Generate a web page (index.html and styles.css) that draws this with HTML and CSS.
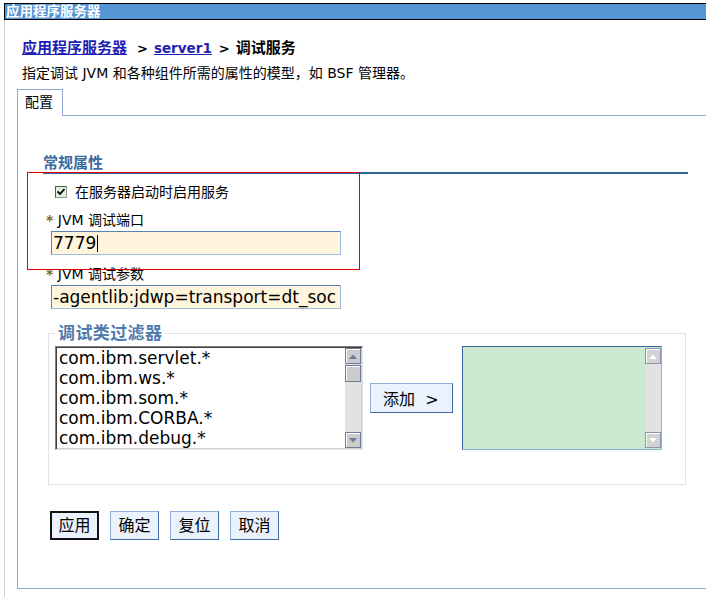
FILE: index.html
```html
<!DOCTYPE html>
<html lang="zh">
<head>
<meta charset="utf-8">
<title>调试服务</title>
<link rel="stylesheet" href="styles.css">
</head>
<body>
<div class="titlebar">应用程序服务器</div>
<div class="page">
  <div class="crumb"><a href="#">应用程序服务器</a><span class="sep sep1">&gt;</span><a href="#" class="latin">server1</a><span class="sep sep2">&gt;</span>调试服务</div>
  <div class="desc">指定调试 JVM 和各种组件所需的属性的模型，如 BSF 管理器。</div>
  <div class="tabs"><div class="tab">配置</div></div>
  <div class="panel">
    <h2 class="section">常规属性</h2>
    <div class="check-row">
      <span class="cb"><svg width="8" height="8" viewBox="0 0 8 8"><path d="M0.5 3.5 L3 6 L7.5 1" fill="none" stroke="#000" stroke-width="1.8"/></svg></span>
      <span>在服务器启动时启用服务</span>
    </div>
    <div class="label"><span class="req">*</span> JVM 调试端口</div>
    <div class="field">7779<span class="caret"></span></div>
    <div class="label label2"><span class="req">*</span> JVM 调试参数</div>
    <div class="field">-agentlib:jdwp=transport=dt_soc</div>
    <fieldset class="filters">
      <legend>调试类过滤器</legend>
      <div class="lists">
        <div class="listbox">
          <div class="items">
            <div class="item">com.ibm.servlet.*</div>
            <div class="item">com.ibm.ws.*</div>
            <div class="item">com.ibm.som.*</div>
            <div class="item">com.ibm.CORBA.*</div>
            <div class="item">com.ibm.debug.*</div>
          </div>
          <div class="sbar">
            <div class="sbtn"><svg width="8" height="5" viewBox="0 0 8 5"><path d="M0 5 L4 0.5 L8 5 Z" fill="#6d7b98"/></svg></div>
            <div class="thumb"></div>
            <div class="track"></div>
            <div class="sbtn"><svg width="8" height="5" viewBox="0 0 8 5"><path d="M0 0 L4 4.5 L8 0 Z" fill="#6d7b98"/></svg></div>
          </div>
        </div>
        <button class="btn add" type="button">添加&nbsp; &gt;</button>
        <div class="listbox green">
          <div class="items"></div>
          <div class="sbar">
            <div class="sbtn off"><svg width="8" height="5" viewBox="0 0 8 5"><path d="M0 5 L4 0.5 L8 5 Z" fill="#ffffff"/></svg></div>
            <div class="track"></div>
            <div class="sbtn off"><svg width="8" height="5" viewBox="0 0 8 5"><path d="M0 0 L4 4.5 L8 0 Z" fill="#ffffff"/></svg></div>
          </div>
        </div>
      </div>
    </fieldset>
    <div class="actions">
      <button class="btn act default" type="button">应用</button>
      <button class="btn act" type="button">确定</button>
      <button class="btn act" type="button">复位</button>
      <button class="btn act" type="button">取消</button>
    </div>
    <div class="redbox"></div>
  </div>
</div>
</body>
</html>
```
FILE: styles.css
```css
html, body {
  margin: 0;
  padding: 0;
  overflow: hidden;
  background: #fff;
}
body {
  font-family: "DejaVu Sans", "Noto Sans CJK SC", sans-serif;
  font-size: 14px;
  color: #000;
}
.titlebar {
  margin: 3px 0 0 4px;
  height: 15px;
  border-top: 1px solid #000;
  border-bottom: 1px solid #000;
  border-left: 1px solid #000;
  background: #5596d6;
  color: #fff;
  font-weight: bold;
  font-size: 13.5px;
  line-height: 15px;
  padding-left: 1px;
  white-space: nowrap;
}
.page {
  margin-left: 4px;
  border-left: 1px solid #d0d0d0;
  padding: 18px 0 10px 12px;
}
.crumb {
  margin-left: 5px;
  height: 20px;
  font-size: 15px;
  line-height: 20px;
  font-weight: bold;
  white-space: nowrap;
}
.crumb a {
  color: #1e1eb4;
  text-decoration: underline;
}
.crumb .latin {
  font-size: 13.5px;
}
.sep { font-size: 13px; }
.sep1 { margin: 0 6px 0 10px; }
.sep2 { margin: 0 6px 0 7px; }
.desc {
  margin: 5px 0 0 5px;
  line-height: 20px;
  white-space: nowrap;
}
.tabs {
  display: flex;
  margin-top: 6px;
}
.tab {
  position: relative;
  z-index: 1;
  height: 26px;
  line-height: 25px;
  padding: 0 9px 0 7px;
  border: 1px solid #94a8d4;
  border-bottom: 0;
  background: #fff;
  margin-bottom: -1px;
}
.panel {
  position: relative;
  border: 1px solid #94a8d4;
  margin-right: -30px;
  padding: 0 0 48px 0;
}
.section {
  margin: 38px 0 0 25px;
  width: 645px;
  font-size: 15px;
  line-height: 18px;
  font-weight: bold;
  color: #3a6aa0;
  border-bottom: 2px solid #336699;
}
.check-row {
  display: flex;
  align-items: center;
  margin: 8px 0 0 37px;
  line-height: 20px;
}
.cb {
  box-sizing: border-box;
  width: 12px;
  height: 12px;
  margin-right: 8px;
  border: 1px solid #555;
  border-right-color: #999;
  border-bottom-color: #999;
  background: #dceedc;
  display: flex;
  align-items: center;
  justify-content: center;
}
.label {
  margin: 8px 0 0 28px;
  line-height: 20px;
  white-space: nowrap;
}
.label2 { margin-top: 9px; }
.req {
  color: #75661a;
  font-weight: bold;
}
.field {
  box-sizing: border-box;
  margin: 1px 0 0 33px;
  width: 290px;
  height: 24px;
  border: 1px solid;
  border-color: #5a82b4 #9bbbe0 #9bbbe0 #5a82b4;
  background: #fff5dc;
  font-size: 17px;
  line-height: 22px;
  padding: 0 1px;
  overflow: hidden;
  white-space: nowrap;
}
.caret {
  display: inline-block;
  width: 1px;
  height: 17px;
  background: #000;
  vertical-align: -3px;
  margin-left: 1px;
}
.filters {
  box-sizing: border-box;
  margin: 14px 0 0 30px;
  width: 638px;
  padding: 3px 0 34px 6px;
  border: 1px solid #e2e2e2;
}
.filters legend {
  padding: 0 3px;
  font-size: 17px;
  line-height: 20px;
  font-weight: bold;
  letter-spacing: 0.4px;
  color: #4f7aab;
}
.lists {
  display: flex;
  align-items: center;
}
.listbox {
  box-sizing: border-box;
  display: flex;
  width: 308px;
  height: 104px;
  border: 1px solid;
  border-color: #808080 #e4e4e4 #e4e4e4 #808080;
  box-shadow: inset 1px 1px 0 #404040, inset -1px -1px 0 #d4d0c8;
  padding: 1px;
  background: #fff;
}
.items {
  flex: 1;
  padding-left: 2px;
  font-size: 17px;
  line-height: 20px;
  overflow: hidden;
  white-space: nowrap;
}
.sbar {
  width: 16px;
  display: flex;
  flex-direction: column;
  background: #e2e2e2;
}
.sbtn, .thumb {
  box-sizing: border-box;
  width: 16px;
  height: 16px;
  border: 1px solid #6f7c99;
  box-shadow: inset 1px 1px 0 #fff;
  background: #cbcbcb;
  display: flex;
  align-items: center;
  justify-content: center;
}
.thumb { height: 17px; margin-top: 1px; }
.track { flex: 1; }
.sbtn.off {
  background: #d2d2d2;
  border-color: #8795b0;
}
.green {
  width: 200px;
  margin-left: 9px;
  border-color: #336699 #8fb1da #8fb1da #336699;
  box-shadow: none;
  padding: 0;
  background: #cde8d0;
}
.green .sbar { margin: 1px 0; }
.btn {
  box-sizing: border-box;
  font-family: "DejaVu Sans", "Noto Sans CJK SC", sans-serif;
  font-size: 16px;
  color: #000;
  background: #eaf2fd;
  border: 1px solid;
  border-color: #8fb1da #3c6a9e #3c6a9e #8fb1da;
  padding: 0;
  margin: 0;
}
.add {
  width: 83px;
  height: 30px;
  margin-left: 7px;
  text-align: left;
  padding-left: 12px;
  white-space: nowrap;
}
.actions {
  display: flex;
  gap: 11px;
  margin: 26px 0 0 32px;
}
.act {
  width: 49px;
  height: 29px;
  line-height: 26px;
}
.act.default {
  border: 2px solid #111;
}
.redbox {
  position: absolute;
  left: 9px;
  top: 56px;
  width: 331px;
  height: 96px;
  border: 1px solid #e00000;
}
```
